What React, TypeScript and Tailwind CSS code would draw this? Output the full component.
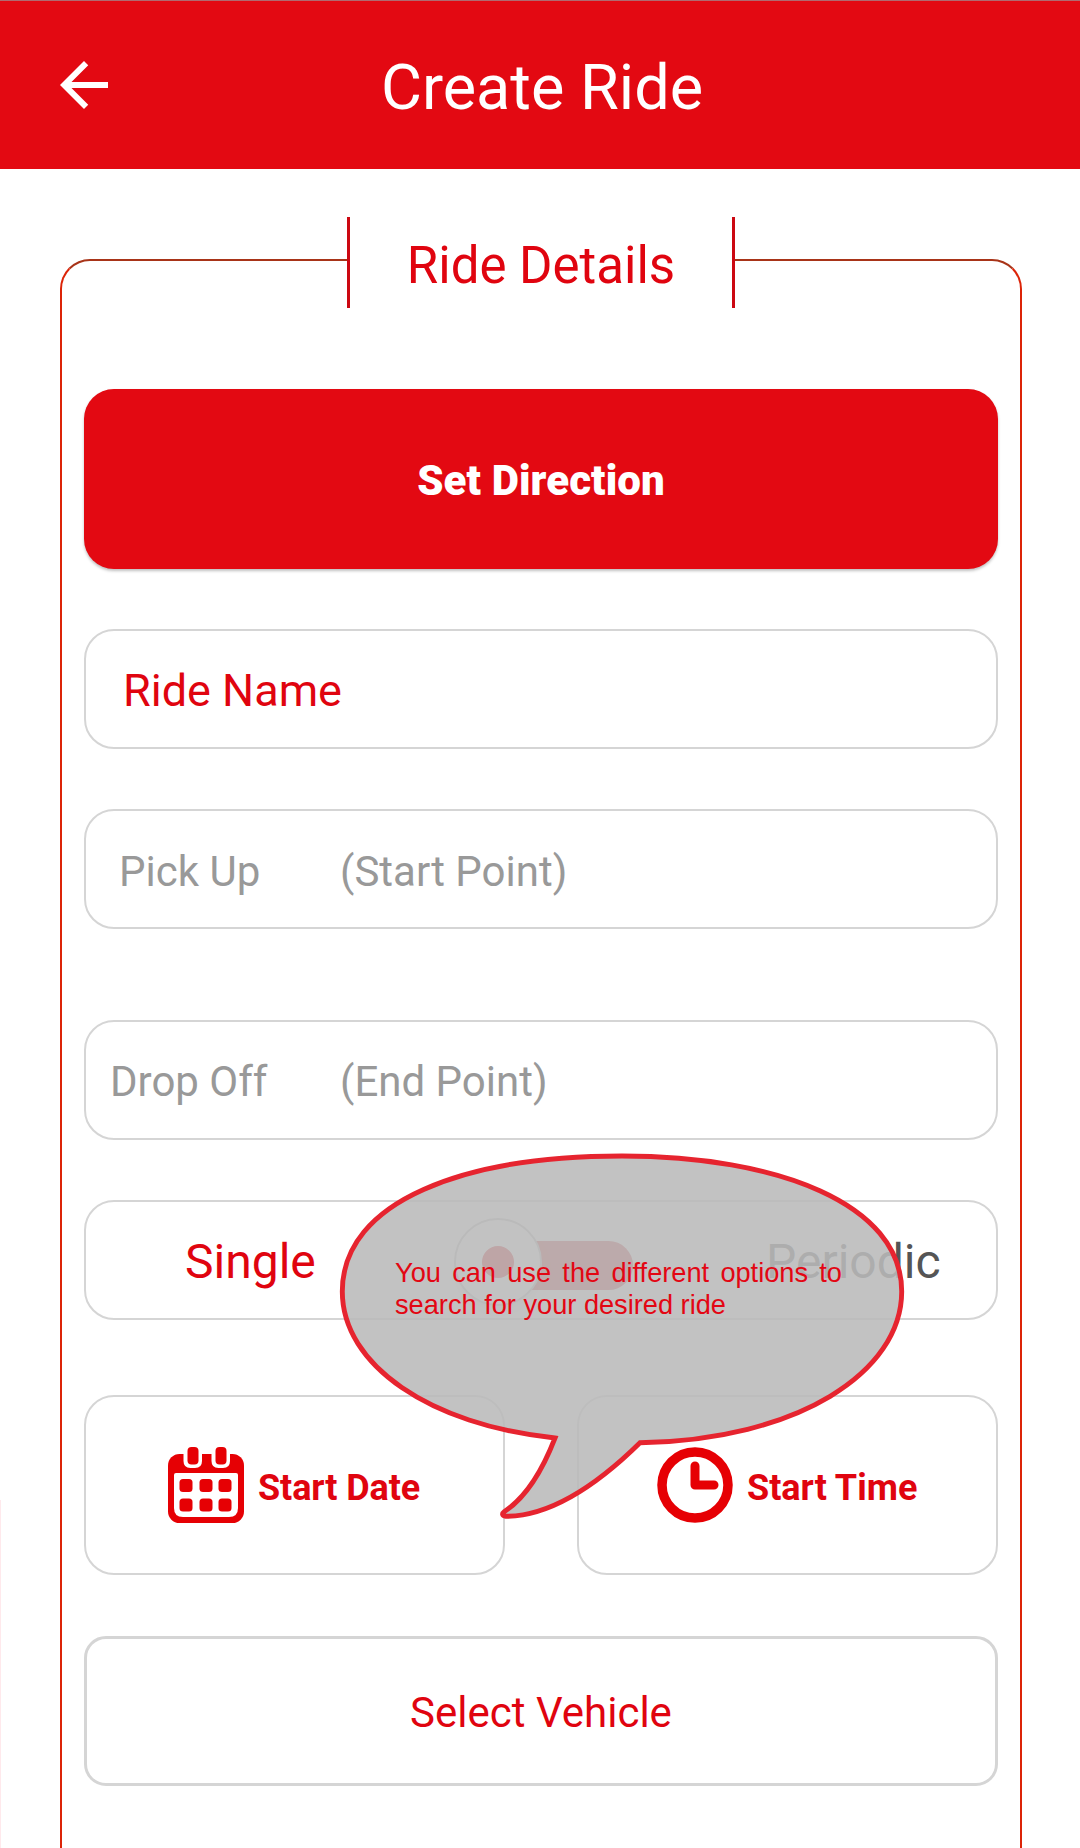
import type { ReactNode } from "react";

function BackArrow() {
  return (
    <svg viewBox="0 0 24 24" className="size-[72px]" fill="#fff">
      <path d="M20 11H7.83l5.59-5.59L12 4l-8 8 8 8 1.41-1.41L7.83 13H20v-2z" />
    </svg>
  );
}

function CalendarIcon() {
  const columns = [11.5, 31.5, 50.5];
  return (
    <svg viewBox="0 0 76 76" className="size-[76px] shrink-0">
      <rect y="7" width="76" height="69" rx="11.5" fill="#e60004" />
      <path d="M6 28q0-2 2-2h60q2 0 2 2v33q0 9-9 9H15q-9 0-9-9z" fill="#fff" />
      <path d="M15.5 5H34v9q0 7-7 7h-4.500q-7 0-7-7zM43.500 5H62v9q0 7-7 7h-4.500q-7 0-7-7z" fill="#fff" />
      <rect x="19.500" width="11" height="17.500" rx="4" fill="#e60004" />
      <rect x="47.500" width="11" height="17.500" rx="4" fill="#e60004" />
      {columns.map((x) => (
        <g key={x} fill="#e60004">
          <rect x={x} y="32" width="13" height="13" rx="3.500" />
          <rect x={x} y="51.500" width="13" height="13" rx="3.500" />
        </g>
      ))}
    </svg>
  );
}

function ClockIcon() {
  return (
    <svg viewBox="0 0 76 76" className="size-[76px] shrink-0" fill="none" stroke="#e60004">
      <circle cx="38" cy="38" r="33" strokeWidth="9.500" />
      <path d="M38 19v19h19" strokeWidth="9" strokeLinecap="round" strokeLinejoin="round" />
    </svg>
  );
}

function Field({ className, children }: { className: string; children?: ReactNode }) {
  return (
    <div className={`flex items-center rounded-[30px] border-2 border-[#d5d5d5] ${className}`}>{children}</div>
  );
}

function Toggle() {
  return (
    <div className="relative mt-[7px] h-[49px] w-[151px] rounded-full bg-[#cf3a40]">
      <div className="absolute -top-[23px] -left-[28px] flex size-[88px] items-center justify-center rounded-full border-2 border-[#bbb] bg-white shadow-lg">
        <div className="size-8 rounded-full bg-[#d81018]" />
      </div>
    </div>
  );
}

function HelpBubble() {
  return (
    <div className="absolute top-[1150px] left-[336px] h-[376px] w-[572px]">
      <svg viewBox="336 1150 572 376" className="absolute inset-0 h-full w-full">
        <path
          d="M342.300 1291.500C342.300 1200 466 1156 622 1156S901.700 1204 901.700 1291.500C901.700 1372 798 1440 640 1442.700C598 1484 552 1516 506 1516.300Q500 1515 504.500 1511.500C528 1496 543 1469 555 1438C430 1425 342.300 1365 342.300 1291.500Z"
          fill="#bababa"
          fillOpacity="0.88"
          stroke="#e6242f"
          strokeWidth="4.900"
        />
      </svg>
      <p className="relative ml-[59px] w-[447px] pt-[107px] text-justify font-['Liberation_Sans',Arial,sans-serif] text-[27.200px] leading-[32.400px] text-[#e30613]">
        You can use the different options to search for your desired ride
      </p>
    </div>
  );
}

export default function App() {
  return (
    <div className="relative h-[1848px] w-[1080px] overflow-hidden bg-white font-[Roboto,sans-serif] text-[#e0040f]">
      <header className="grid h-[169px] grid-cols-[1fr_auto_1fr] items-center border-t border-[#b06a70] bg-[#e30912] text-white">
        <div className="pl-12">
          <BackArrow />
        </div>
        <h1 className="pt-[6px] pl-1 text-[63px] leading-[74px]">Create Ride</h1>
      </header>

      <main className="mr-[58px] ml-[60px] mt-[48px]">
        <div className="flex">
          <div className="mt-[42px] h-[49px] flex-1 rounded-tl-[30px] border-t-2 border-l-2 border-t-[#a83418] border-l-[#dc2408]" />
          <h2 className="flex h-[91px] w-[388px] items-center justify-center border-x-3 border-[#cc0812] pt-[6px] text-[51px] leading-[60px]">
            Ride Details
          </h2>
          <div className="mt-[42px] h-[49px] flex-1 rounded-tr-[30px] border-t-2 border-r-2 border-t-[#a83418] border-r-[#dc2408]" />
        </div>

        <div className="flex h-[1540px] flex-col border-x-2 border-[#dc2408] px-[22px] pt-[81px]">
          <button className="h-[180px] shrink-0 rounded-[30px] bg-[#e30912] pt-[2px] text-[42px] font-black tracking-[0.1px] text-white shadow-[0_2px_3px_rgba(0,0,0,0.25)]">
            Set Direction
          </button>

          <Field className="mt-[60px] h-[120px] shrink-0 pt-1 pl-[37px] text-[45px]">Ride Name</Field>
          <Field className="mt-[60px] h-[120px] shrink-0 pt-[5px] pl-[33px] text-[42px] text-[#999]">
            <span className="w-[221px]">Pick Up</span>
            <span>(Start Point)</span>
          </Field>
          <Field className="mt-[91px] h-[120px] shrink-0 pt-[3px] pl-[24px] text-[42px] text-[#999]">
            <span className="w-[230px]">Drop Off</span>
            <span>(End Point)</span>
          </Field>

          <Field className="mt-[60px] h-[120px] shrink-0 pt-[3px] pl-[99px] text-[48px]">
            <span className="w-[297px]">Single</span>
            <Toggle />
            <span className="ml-[133px] text-[#555]">Periodic</span>
          </Field>

          <div className="mt-[75px] flex shrink-0 justify-between text-[36px] font-bold">
            <Field className="h-[180px] w-[421px] gap-[14px] pl-[82px]">
              <CalendarIcon />
              <span className="pt-[5px] tracking-[-0.1px]">Start Date</span>
            </Field>
            <Field className="h-[180px] w-[421px] gap-[14px] pl-[78px]">
              <ClockIcon />
              <span className="pt-[5px]">Start Time</span>
            </Field>
          </div>

          <button className="mt-[61px] h-[150px] shrink-0 rounded-[22px] border-3 border-[#d5d5d5] pt-[3px] text-[42px]">
            Select Vehicle
          </button>
        </div>
      </main>

      <HelpBubble />
      <div className="absolute top-[1500px] left-0 h-[348px] w-px bg-[#ffe9ec]" />
    </div>
  );
}
